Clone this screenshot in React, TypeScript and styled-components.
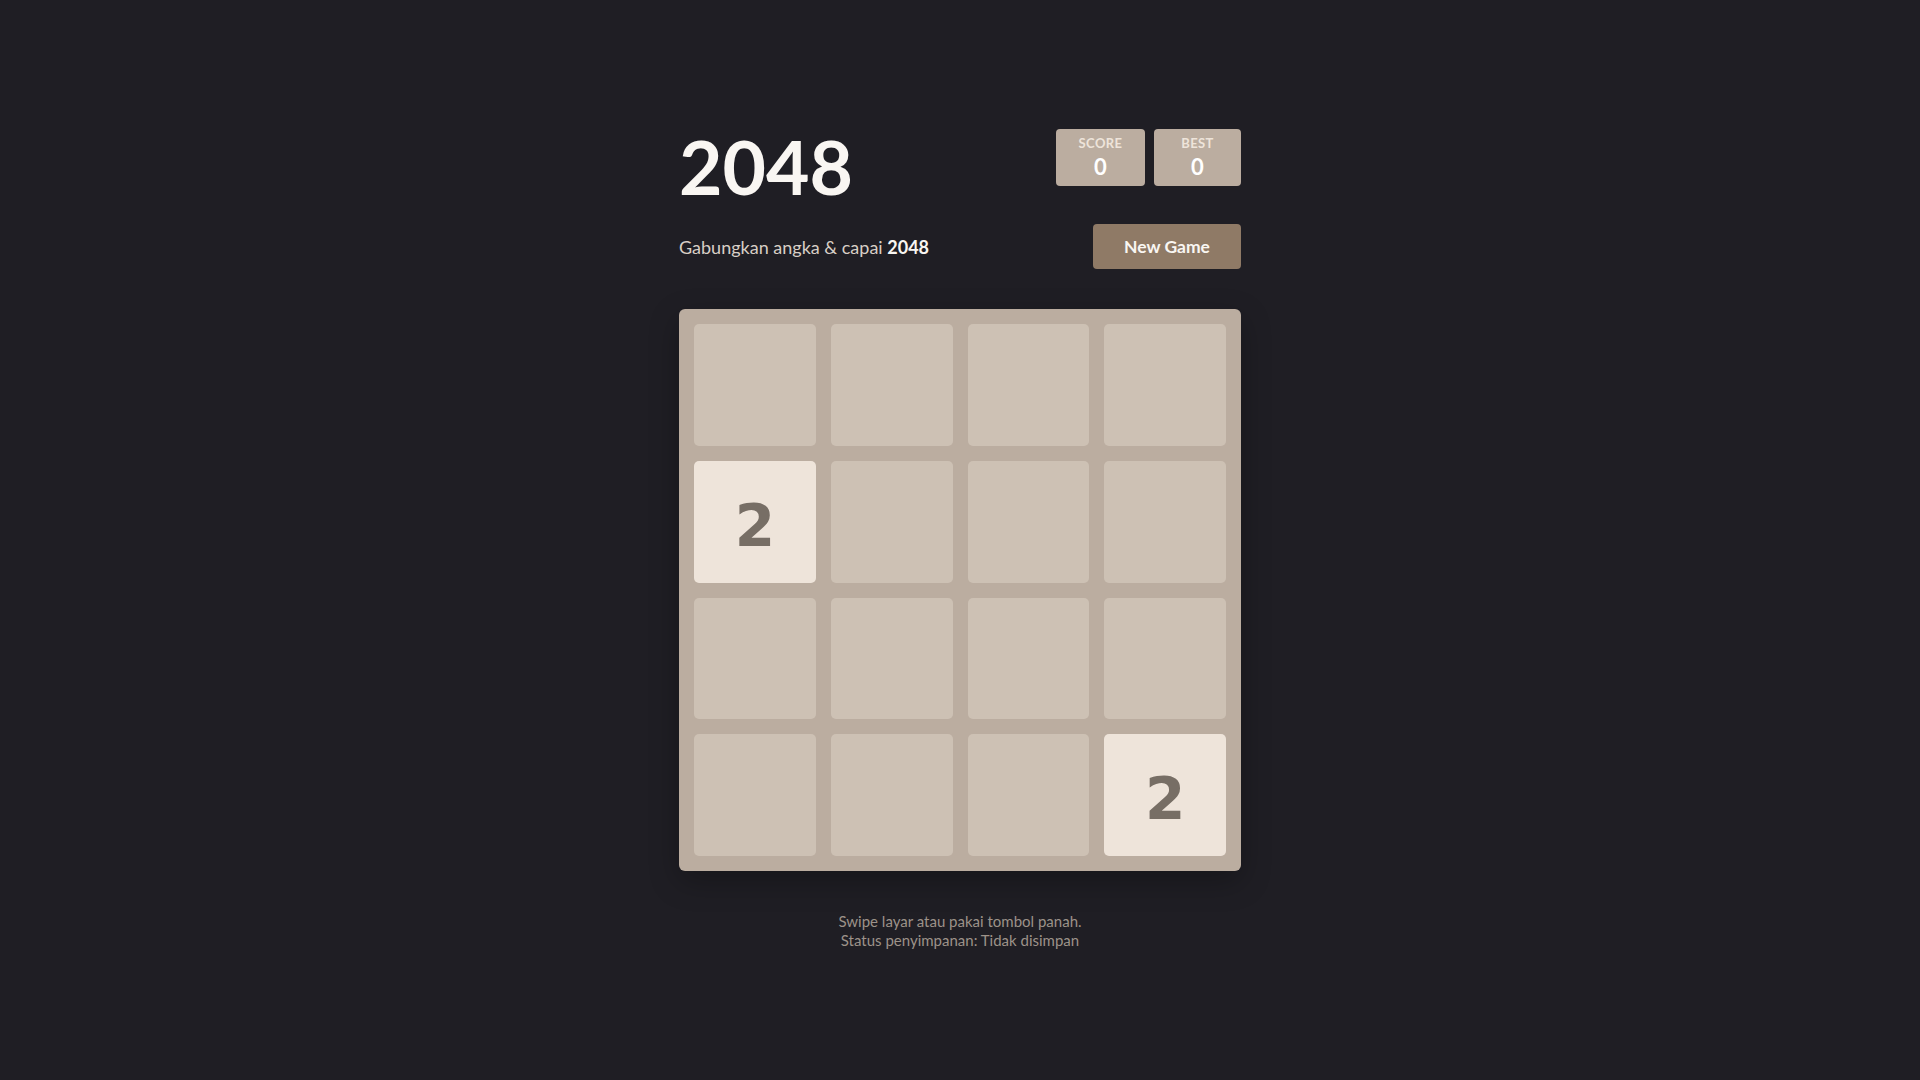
import React, { useState } from 'react';
import styled, { createGlobalStyle } from 'styled-components';

const GlobalStyle = createGlobalStyle`
  html, body {
    margin: 0;
    padding: 0;
    background: #1f1e24;
  }
  body {
    font-family: 'Lato', 'Open Sans', sans-serif;
    color: #f9f6f2;
  }
`;

const Page = styled.div`
  min-height: 100vh;
  display: flex;
  justify-content: center;
`;

const Container = styled.div`
  width: 562px;
  padding-top: 129px;
  display: flex;
  flex-direction: column;
`;

const Header = styled.div`
  display: flex;
  justify-content: space-between;
  align-items: flex-start;
`;

const Title = styled.h1`
  margin: 0;
  font-size: 75px;
  line-height: 1;
  font-weight: 700;
  color: #f9f6f2;
`;

const Scores = styled.div`
  display: flex;
  gap: 9px;
`;

const ScoreBox = styled.div<{ $w: number }>`
  width: ${(p) => p.$w}px;
  height: 57px;
  box-sizing: border-box;
  padding-top: 7px;
  background: #bbada0;
  border-radius: 4px;
  display: flex;
  flex-direction: column;
  align-items: center;
  gap: 4px;

  .label {
    font-size: 13px;
    line-height: 14px;
    font-weight: 700;
    letter-spacing: 0.4px;
    color: #eee4da;
  }
  .value {
    font-size: 22px;
    line-height: 26px;
    font-weight: 700;
    color: #ffffff;
  }
`;

const SubRow = styled.div`
  margin-top: 20px;
  display: flex;
  justify-content: space-between;
  align-items: center;
`;

const Intro = styled.p`
  margin: 0;
  font-size: 18px;
  color: #d8cfc6;
  b {
    color: #f9f6f2;
  }
`;

const NewGameButton = styled.button`
  width: 148px;
  height: 45px;
  border: none;
  border-radius: 4px;
  background: #8f7a66;
  color: #f9f6f2;
  font-family: inherit;
  font-size: 17.5px;
  font-weight: 700;
  cursor: pointer;
`;

const Board = styled.div`
  margin-top: 40px;
  width: 562px;
  height: 562px;
  box-sizing: border-box;
  padding: 15px;
  background: #bbada0;
  border-radius: 6px;
  box-shadow: 0 10px 30px rgba(0, 0, 0, 0.28);
  display: grid;
  grid-template-columns: repeat(4, 1fr);
  grid-template-rows: repeat(4, 1fr);
  gap: 15px;
`;

const Cell = styled.div<{ $value: number }>`
  border-radius: 5px;
  background: ${(p) => (p.$value ? '#eee4da' : '#cdc1b4')};
  display: flex;
  align-items: center;
  justify-content: center;
  padding-top: 8px;
  box-sizing: border-box;
  font-family: 'DejaVu Sans', sans-serif;
  font-weight: 700;
  font-size: 58px;
  color: #776e65;
`;

const Footer = styled.p`
  margin: 41px 0 0;
  text-align: center;
  font-size: 15px;
  line-height: 19px;
  color: #9c9289;
`;

const App = () => {
  const [score] = useState(0);
  const [best] = useState(0);
  const [grid] = useState<number[]>([
    0, 0, 0, 0,
    2, 0, 0, 0,
    0, 0, 0, 0,
    0, 0, 0, 2,
  ]);

  return (
    <Page>
      <GlobalStyle />
      <Container>
        <Header>
          <Title>2048</Title>
          <Scores>
            <ScoreBox $w={89}>
              <span className="label">SCORE</span>
              <span className="value">{score}</span>
            </ScoreBox>
            <ScoreBox $w={87}>
              <span className="label">BEST</span>
              <span className="value">{best}</span>
            </ScoreBox>
          </Scores>
        </Header>
        <SubRow>
          <Intro>
            Gabungkan angka &amp; capai <b>2048</b>
          </Intro>
          <NewGameButton>New Game</NewGameButton>
        </SubRow>
        <Board>
          {grid.map((v, i) => (
            <Cell key={i} $value={v}>
              {v ? v : ''}
            </Cell>
          ))}
        </Board>
        <Footer>
          Swipe layar atau pakai tombol panah.
          <br />
          Status penyimpanan: Tidak disimpan
        </Footer>
      </Container>
    </Page>
  );
};

export default App;
